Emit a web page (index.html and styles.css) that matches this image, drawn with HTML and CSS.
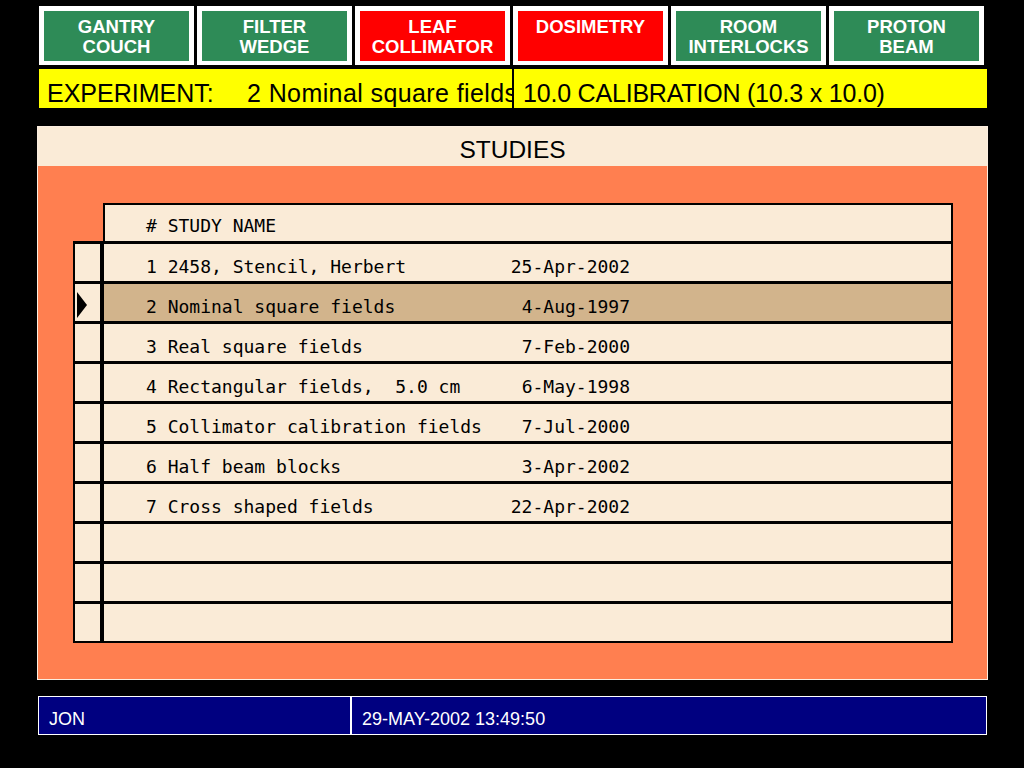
FILE: index.html
```html
<!DOCTYPE html>
<html>
<head>
<meta charset="utf-8">
<link rel="stylesheet" href="styles.css">
</head>
<body>
<div class="screen">
  <div class="tabs">
    <div class="tab green">GANTRY<br>COUCH</div>
    <div class="tab green">FILTER<br>WEDGE</div>
    <div class="tab red">LEAF<br>COLLIMATOR</div>
    <div class="tab red">DOSIMETRY</div>
    <div class="tab green">ROOM<br>INTERLOCKS</div>
    <div class="tab green">PROTON<br>BEAM</div>
  </div>

  <div class="expbar">
    <div class="exp-left"><span class="exp-label">EXPERIMENT:</span><span class="exp-value">2 Nominal square fields</span></div>
    <div class="exp-right">10.0 CALIBRATION (10.3 x 10.0)</div>
  </div>

  <div class="panel">
    <div class="panel-title">STUDIES</div>
    <div class="panel-body">
      <div class="table">
        <div class="thead"><span class="txt">#&nbsp;STUDY NAME</span></div>
        <div class="row"><div class="ind"></div><div class="cell"><div class="txt"><span>1 2458, Stencil, Herbert</span><span>25-Apr-2002</span></div></div></div>
        <div class="row sel"><div class="ind"><span class="arrow"></span></div><div class="cell"><div class="txt"><span>2 Nominal square fields</span><span>4-Aug-1997</span></div></div></div>
        <div class="row"><div class="ind"></div><div class="cell"><div class="txt"><span>3 Real square fields</span><span>7-Feb-2000</span></div></div></div>
        <div class="row"><div class="ind"></div><div class="cell"><div class="txt"><span>4 Rectangular fields,  5.0 cm</span><span>6-May-1998</span></div></div></div>
        <div class="row"><div class="ind"></div><div class="cell"><div class="txt"><span>5 Collimator calibration fields</span><span>7-Jul-2000</span></div></div></div>
        <div class="row"><div class="ind"></div><div class="cell"><div class="txt"><span>6 Half beam blocks</span><span>3-Apr-2002</span></div></div></div>
        <div class="row"><div class="ind"></div><div class="cell"><div class="txt"><span>7 Cross shaped fields</span><span>22-Apr-2002</span></div></div></div>
        <div class="row"><div class="ind"></div><div class="cell"></div></div>
        <div class="row"><div class="ind"></div><div class="cell"></div></div>
        <div class="row last"><div class="ind"></div><div class="cell"></div></div>
      </div>
    </div>
  </div>

  <div class="status">
    <div class="st-user">JON</div>
    <div class="st-time">29-MAY-2002 13:49:50</div>
  </div>
</div>
</body>
</html>
```

FILE: styles.css
```css
html, body {
  margin: 0;
  padding: 0;
  background: #000;
}
body {
  width: 1024px;
  height: 768px;
  overflow: hidden;
  font-family: "Liberation Sans", Arial, sans-serif;
}
.screen {
  padding: 6px 0 0 39px;
}
.tabs {
  display: flex;
  gap: 3px;
}
.tab {
  box-sizing: border-box;
  width: 155px;
  height: 59px;
  border: 5px solid #fff;
  border-bottom-width: 4px;
  padding-top: 6px;
  color: #fff;
  font-weight: bold;
  font-size: 18.5px;
  line-height: 20px;
  text-align: center;
}
.green { background: #2e8b57; }
.red { background: #ff0000; }

.expbar {
  margin-top: 4px;
  width: 948px;
  height: 39px;
  background: #ffff00;
  display: flex;
  font-size: 25px;
  line-height: 30px;
  color: #000;
}
.exp-left {
  width: 465px;
  padding: 9px 0 0 8px;
  white-space: nowrap;
  overflow: hidden;
  border-right: 2px solid #000;
}
.exp-label {
  display: inline-block;
  width: 200px;
}
.exp-value {
  letter-spacing: 0.4px;
}
.exp-right {
  padding: 9px 0 0 9px;
  white-space: nowrap;
  letter-spacing: -0.2px;
}

.panel {
  margin: 18px 0 0 -2px;
  width: 951px;
  box-sizing: border-box;
  border: 1px solid #fbeee0;
}
.panel-title {
  height: 39px;
  box-sizing: border-box;
  background: #faebd7;
  text-align: center;
  font-size: 24.5px;
  line-height: 28px;
  padding-top: 9px;
  color: #000;
}
.panel-body {
  background: #ff7f50;
  padding: 37px 34px 36px 35px;
}
.table {
  width: 880px;
  font-family: "DejaVu Sans Mono", monospace;
  font-size: 18px;
  line-height: 21px;
  color: #000;
}
.thead {
  margin-left: 30px;
  height: 38px;
  box-sizing: border-box;
  border: 2px solid #000;
  border-bottom: 0;
  background: #faebd7;
  padding: 10px 0 0 41px;
}
.row {
  display: flex;
  height: 40px;
  box-sizing: border-box;
  border-top: 3px solid #000;
  border-left: 2px solid #000;
  border-right: 2px solid #000;
}
.row.last {
  height: 42px;
  border-bottom: 2px solid #000;
}
.ind {
  width: 25px;
  border-right: 4px solid #000;
  background: #faebd7;
  display: flex;
  align-items: center;
}
.arrow {
  margin: 4px 0 0 2px;
  width: 0;
  height: 0;
  border-top: 13px solid transparent;
  border-bottom: 13px solid transparent;
  border-left: 10px solid #000;
}
.cell {
  flex: 1;
  background: #faebd7;
  padding: 12px 0 0 42px;
}
.row.sel .cell {
  background: #d2b48c;
}
.txt {
  display: flex;
  justify-content: space-between;
  width: 484px;
  white-space: pre;
}

.status {
  margin: 16px 0 0 -1px;
  width: 949px;
  height: 39px;
  box-sizing: border-box;
  border: 1px solid #fff;
  background: #000080;
  display: flex;
  color: #fff;
  font-size: 18px;
  line-height: 20px;
}
.st-user {
  width: 301px;
  padding: 12px 0 0 10px;
  border-right: 2px solid #fff;
}
.st-time {
  padding: 12px 0 0 10px;
}
```
